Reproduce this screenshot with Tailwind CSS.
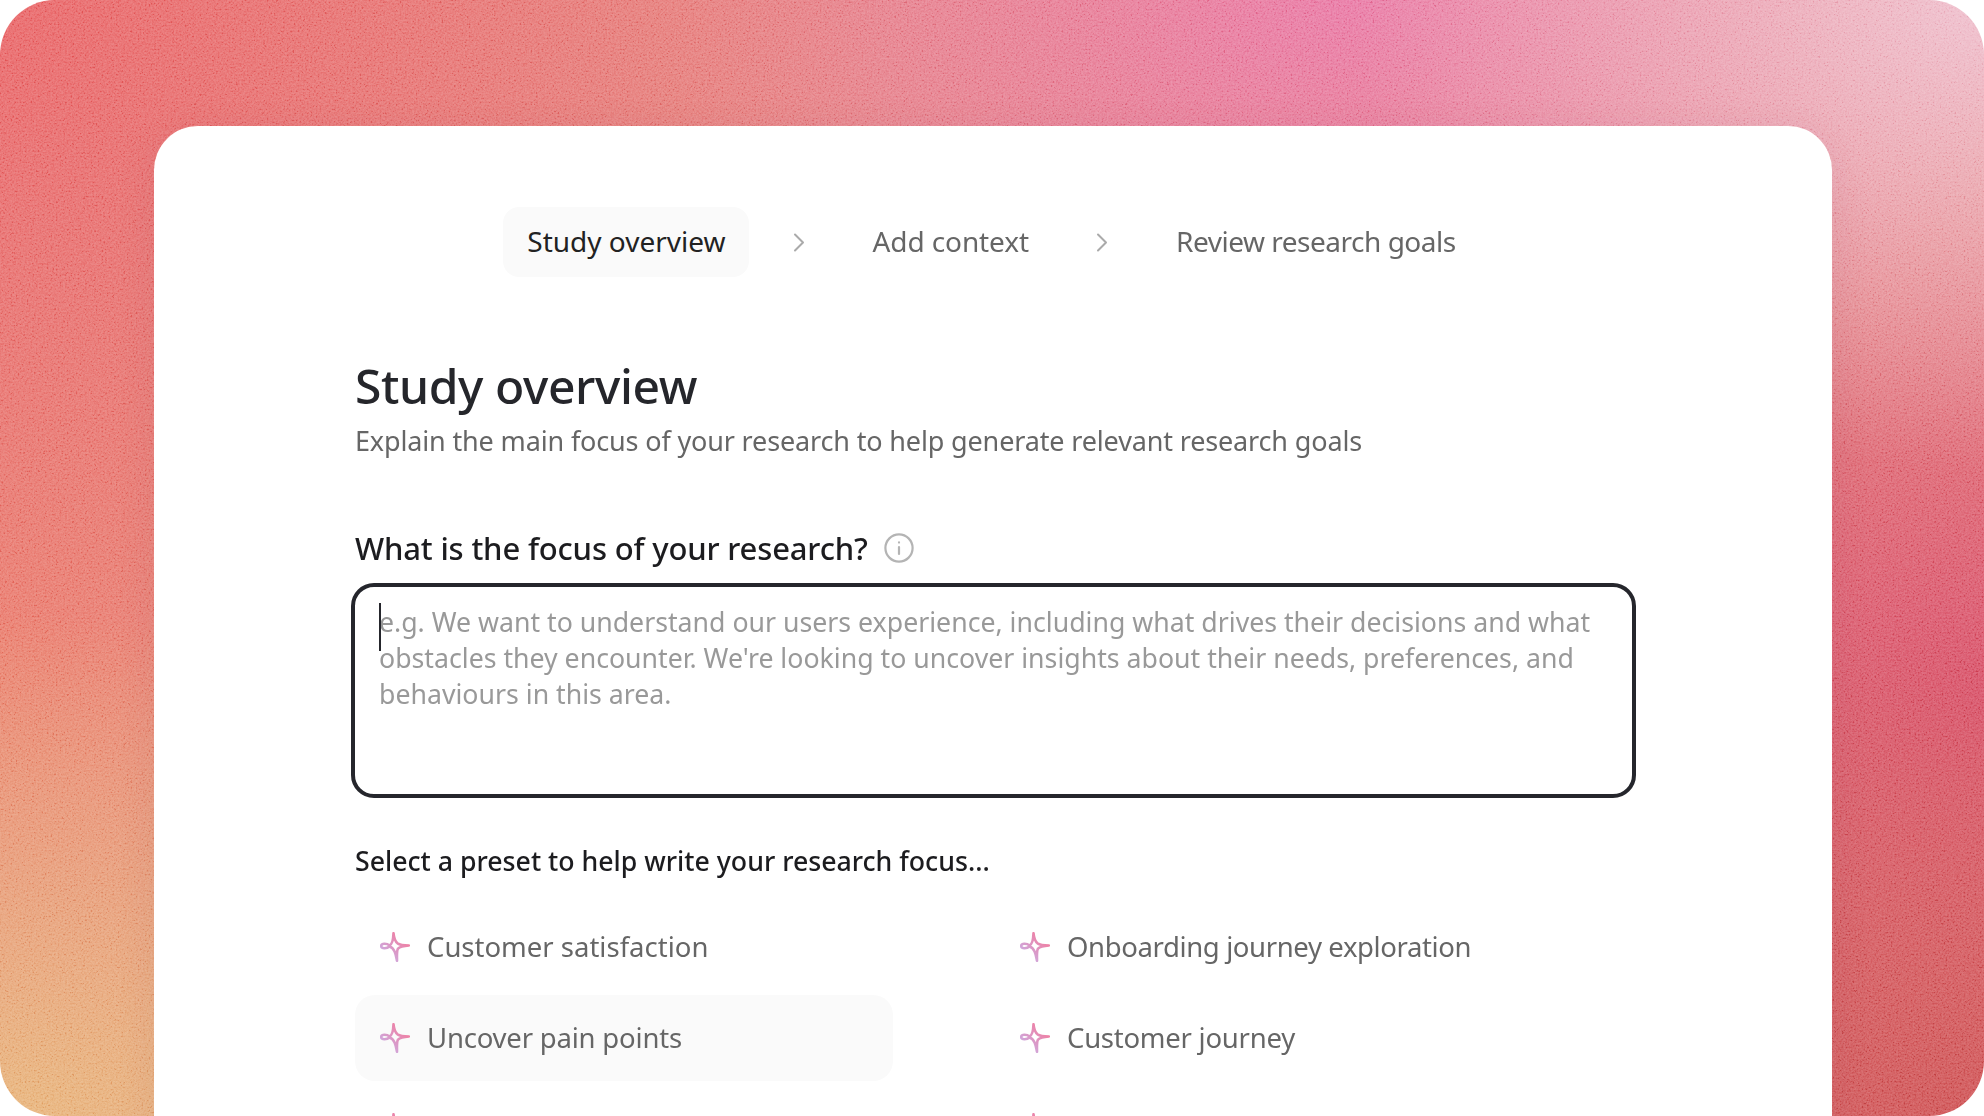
<!DOCTYPE html>
<html lang="en">
<head>
  <meta charset="UTF-8" />
  <meta name="viewport" content="width=device-width, initial-scale=1.0" />
  <title>Study overview</title>
  <script src="https://cdn.jsdelivr.net/npm/@tailwindcss/browser@4"></script>
</head>
<body class="bg-white font-['Noto_Sans',sans-serif]">
  <!-- shared gradient + star for the preset icons -->
  <svg width="0" height="0" class="absolute">
    <defs>
      <linearGradient id="sparkle" x1="26" y1="4" x2="4" y2="26" gradientUnits="userSpaceOnUse">
        <stop offset="0" stop-color="#f4799a" />
        <stop offset="1" stop-color="#c9aee6" />
      </linearGradient>
      <symbol id="star" viewBox="0 0 30 30">
        <path d="M13.5 1.2C14 6 15 9.5 17.5 11.3C20 13 24 13.4 28.8 13.5C24 13.9 20 14.6 18 16.6C16.6 18.4 17 23 17 28.8C15.8 23 15 16.5 9.5 14.6C7 16.6 1.2 17 1.2 14C1.2 11 7 11.4 9.5 13.4C12 12.5 13.2 8 13.5 1.2Z" fill="none" stroke="url(#sparkle)" stroke-width="2.6" stroke-linejoin="round" />
      </symbol>
    </defs>
  </svg>

  <div class="relative h-[1116px] overflow-hidden rounded-[55px] pt-[126px] bg-[radial-gradient(ellipse_32%_42%_at_100%_0%,#efc0ce_0%,#efc0ce00_100%),radial-gradient(ellipse_55%_45%_at_0%_100%,#e8b57c_0%,#e8b57c00_100%),radial-gradient(ellipse_50%_45%_at_100%_100%,#cf5557_0%,#cf555700_100%),radial-gradient(ellipse_35%_48%_at_100%_62%,#d9536c_0%,#d9536c00_100%),radial-gradient(ellipse_45%_70%_at_0%_0%,#e9686a_0%,#e9686a00_100%),radial-gradient(ellipse_25%_45%_at_0%_58%,#ea8270_0%,#ea827000_100%),radial-gradient(ellipse_35%_40%_at_68%_0%,#e97ba6_0%,#e97ba600_100%),linear-gradient(#e58682,#e58682)]">
    <!-- grain -->
    <svg class="absolute inset-0 w-full h-full mix-blend-soft-light opacity-40" aria-hidden="true">
      <filter id="grain" x="0" y="0" width="100%" height="100%">
        <feTurbulence type="fractalNoise" baseFrequency="0.55" numOctaves="2" stitchTiles="stitch" />
        <feColorMatrix type="saturate" values="0" />
        <feComponentTransfer>
          <feFuncR type="linear" slope="2.6" intercept="-0.8" />
          <feFuncG type="linear" slope="2.6" intercept="-0.8" />
          <feFuncB type="linear" slope="2.6" intercept="-0.8" />
          <feFuncA type="linear" slope="0" intercept="1" />
        </feComponentTransfer>
      </filter>
      <rect width="100%" height="100%" filter="url(#grain)" />
    </svg>

    <div class="relative ml-[154px] mr-[152px] h-[1100px] rounded-[44px] bg-white pt-[81px] pl-[201px] pr-[200px] shadow-[0_8px_40px_rgba(120,40,60,0.08)]">
      <!-- stepper -->
      <nav class="flex items-center justify-center gap-[43.5px] text-[28px] text-[#666] -ml-[4px]">
        <span class="h-[70px] flex items-center px-6 pb-[2px] rounded-2xl bg-[#fafafa] text-[#222]">Study overview</span>
        <svg class="w-[12px] h-[19px] text-[#aaa]" viewBox="0 0 12 19" fill="none" stroke="currentColor" stroke-width="2" stroke-linecap="round" stroke-linejoin="round"><path d="M2 1.5l8 8-8 8" /></svg>
        <span class="px-6 pb-[2px] tracking-[-0.1px]">Add context</span>
        <svg class="w-[12px] h-[19px] text-[#aaa]" viewBox="0 0 12 19" fill="none" stroke="currentColor" stroke-width="2" stroke-linecap="round" stroke-linejoin="round"><path d="M2 1.5l8 8-8 8" /></svg>
        <span class="px-6 pb-[2px] tracking-[-0.48px]">Review research goals</span>
      </nav>

      <h1 class="mt-[79px] text-[48px] leading-[60px] font-medium tracking-[-0.4px] text-[#25262b]">Study overview</h1>
      <p class="mt-[5px] text-[27px] leading-[40px] tracking-[-0.15px] text-[#666]">Explain the main focus of your research to help generate relevant research goals</p>

      <div class="mt-[67px] flex items-center gap-[16px] h-[40px]">
        <label class="text-[31px] leading-[40px] font-medium tracking-[-0.17px] text-[#1c1c1f]">What is the focus of your research?</label>
        <svg class="w-[30px] h-[30px] text-[#b4b4b4]" viewBox="0 0 30 30" fill="none" stroke="currentColor" stroke-width="2.2" stroke-linecap="round"><circle cx="15" cy="15" r="13.6" /><path d="M15 14v7" /><path d="M15 9.4v.2" /></svg>
      </div>

      <!-- focused textarea -->
      <div class="relative mt-[19px] h-[207px] rounded-[19px] outline-4 outline-[#25262c] px-6 pt-[17px] text-[26.7px] leading-[36px] text-[#999]">
        <span class="absolute left-6 top-[16px] w-[2px] h-[48px] bg-[#25262c]"></span>
        e.g. We want to understand our users experience, including what drives their decisions and what obstacles they encounter. We're looking to uncover insights about their needs, preferences, and behaviours in this area.
      </div>

      <p class="mt-[47px] text-[26.7px] leading-[40px] font-medium text-[#1c1c1f]">Select a preset to help write your research focus...</p>

      <div class="mt-[23px] grid grid-cols-[538px_538px] gap-x-[102px] gap-y-[4.5px] text-[27.5px] text-[#666]">
        <div class="h-[86px] flex items-center gap-[17px] pl-[25px] rounded-[20px]"><svg class="w-[30px] h-[30px]"><use href="#star" /></svg>Customer satisfaction</div>
        <div class="h-[86px] flex items-center gap-[17px] pl-[25px] rounded-[20px] tracking-[-0.38px]"><svg class="w-[30px] h-[30px]"><use href="#star" /></svg>Onboarding journey exploration</div>
        <div class="h-[86px] flex items-center gap-[17px] pl-[25px] rounded-[20px] bg-[#fafafa] tracking-[-0.2px]"><svg class="w-[30px] h-[30px]"><use href="#star" /></svg>Uncover pain points</div>
        <div class="h-[86px] flex items-center gap-[17px] pl-[25px] rounded-[20px] tracking-[-0.25px]"><svg class="w-[30px] h-[30px]"><use href="#star" /></svg>Customer journey</div>
        <div class="h-[86px] flex items-center gap-[17px] pl-[25px] rounded-[20px]"><svg class="w-[30px] h-[30px]"><use href="#star" /></svg></div>
        <div class="h-[86px] flex items-center gap-[17px] pl-[25px] rounded-[20px]"><svg class="w-[30px] h-[30px]"><use href="#star" /></svg></div>
      </div>
    </div>
  </div>
</body>
</html>
